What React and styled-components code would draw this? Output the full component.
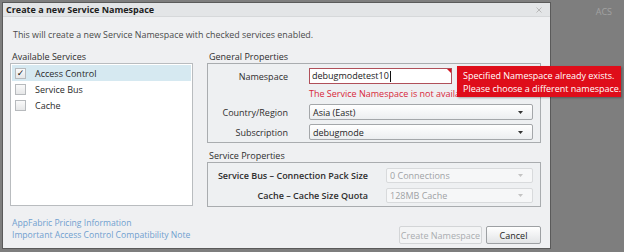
import styled, { createGlobalStyle } from "styled-components";

const GlobalStyle = createGlobalStyle`
  html, body {
    margin: 0;
    padding: 0;
    background: #7e7e7e;
    font-family: "Open Sans", "Noto Sans", sans-serif;
  }
`;

const services = [
  { name: "Access Control", checked: true },
  { name: "Service Bus", checked: false },
  { name: "Cache", checked: false },
];

const Arrow = ({ disabled }) => (
  <svg width="5" height="3" viewBox="0 0 5 3">
    <path d="M0 0 L5 0 L2.5 3 Z" fill={disabled ? "#c4c4c4" : "#333"} />
  </svg>
);

const Select = ({ value, disabled, width }) => (
  <SelectBox $disabled={disabled} $width={width}>
    <span>{value}</span>
    <Arrow disabled={disabled} />
  </SelectBox>
);

const App = () => {
  return (
    <>
      <GlobalStyle />
      <Screen>
        <Dialog>
          <TitleBar>
            <Title>Create a new Service Namespace</Title>
            <Close>
              <svg width="6" height="6" viewBox="0 0 6 6">
                <path d="M0.5 0.5 L5.5 5.5 M5.5 0.5 L0.5 5.5" stroke="#b8b8b8" strokeWidth="1" />
              </svg>
            </Close>
          </TitleBar>
          <Body>
            <Intro>This will create a new Service Namespace with checked services enabled.</Intro>
            <Columns>
              <LeftCol>
                <SectionLabel>Available Services</SectionLabel>
                <ListBox>
                  {services.map((s) => (
                    <ListItem key={s.name} $selected={s.checked}>
                      <Check>{s.checked ? "✓" : ""}</Check>
                      {s.name}
                    </ListItem>
                  ))}
                </ListBox>
              </LeftCol>
              <RightCol>
                <SectionLabel>General Properties</SectionLabel>
                <Group $pad="4px 0 2px">
                  <FieldRow $label="80px" $gap="21px" $h="16px">
                    <FieldLabel>Namespace</FieldLabel>
                    <InputWrap>
                      <TextInput>
                        debugmodetest10<Caret />
                      </TextInput>
                      <Corner />
                      <Tooltip>
                        Specified Namespace already exists.
                        <br />
                        Please choose a different namespace.
                      </Tooltip>
                    </InputWrap>
                  </FieldRow>
                  <ErrorLine>The Service Namespace is not available.</ErrorLine>
                  <FieldRow $label="80px" $gap="21px" $h="16px">
                    <FieldLabel>Country/Region</FieldLabel>
                    <Select value="Asia (East)" width="224px" />
                  </FieldRow>
                  <Spacer $h="4px" />
                  <FieldRow $label="80px" $gap="21px" $h="16px">
                    <FieldLabel>Subscription</FieldLabel>
                    <Select value="debugmode" width="224px" />
                  </FieldRow>
                </Group>
                <SectionLabel $top="7px">Service Properties</SectionLabel>
                <Group $pad="5px 0 3px">
                  <FieldRow $label="160px" $gap="18px" $h="15px">
                    <FieldLabel $bold>Service Bus – Connection Pack Size</FieldLabel>
                    <Select value="0 Connections" width="147px" disabled />
                  </FieldRow>
                  <Spacer $h="5px" />
                  <FieldRow $label="160px" $gap="18px" $h="15px">
                    <FieldLabel $bold>Cache – Cache Size Quota</FieldLabel>
                    <Select value="128MB Cache" width="147px" disabled />
                  </FieldRow>
                </Group>
              </RightCol>
            </Columns>
            <Footer>
              <Links>
                <Link>AppFabric Pricing Information</Link>
                <Link>Important Access Control Compatibility Note</Link>
              </Links>
              <Buttons>
                <Button disabled $width="83px">Create Namespace</Button>
                <Button $width="55px">Cancel</Button>
              </Buttons>
            </Footer>
          </Body>
        </Dialog>
        <Side>ACS</Side>
      </Screen>
    </>
  );
};

export default App;

const Screen = styled.div`
  display: flex;
  width: 624px;
  height: 252px;
  overflow: hidden;
  padding-top: 2px;
  box-sizing: border-box;
`;

const Dialog = styled.div`
  margin-left: 2px;
  width: 549px;
  height: 247px;
  box-sizing: border-box;
  border: 1px solid #5a5a5a;
  background: #eff0f2;
  display: flex;
  flex-direction: column;
`;

const TitleBar = styled.div`
  height: 13px;
  background: #e3e5e7;
  border-bottom: 1px solid #d6d8da;
  display: flex;
  align-items: center;
  justify-content: space-between;
  padding: 0 6px 0 3px;
`;

const Title = styled.div`
  font-size: 9px;
  font-weight: 700;
  color: #1e1e1e;
`;

const Close = styled.div`
  display: flex;
  align-items: center;
  padding-right: 2px;
`;

const Body = styled.div`
  flex: 1;
  display: flex;
  flex-direction: column;
  padding: 0 7px 0 7px;
`;

const Intro = styled.div`
  margin-top: 12px;
  height: 12px;
  line-height: 12px;
  font-size: 8.9px;
  color: #4a4a4a;
  padding-left: 3px;
`;

const Columns = styled.div`
  display: flex;
  gap: 14px;
  margin-top: 10px;
`;

const LeftCol = styled.div`
  width: 183px;
  display: flex;
  flex-direction: column;
`;

const RightCol = styled.div`
  width: 334px;
  display: flex;
  flex-direction: column;
`;

const SectionLabel = styled.div`
  height: 12px;
  line-height: 12px;
  font-size: 9px;
  font-weight: 500;
  color: #2e2e2e;
  padding-left: 2px;
  margin-top: ${({ $top }) => $top || "0"};
`;

const ListBox = styled.div`
  height: 143px;
  box-sizing: border-box;
  border: 1px solid #b9bcbf;
  background: #fff;
  padding: 1px;
  display: flex;
  flex-direction: column;
`;

const ListItem = styled.div`
  height: 16px;
  display: flex;
  align-items: center;
  gap: 9px;
  padding-left: 3px;
  font-size: 9px;
  color: #2a2a2a;
  background: ${({ $selected }) => ($selected ? "#d6e9f1" : "transparent")};
`;

const Check = styled.span`
  width: 9px;
  height: 9px;
  border: 1px solid #b7babd;
  background: linear-gradient(#fafafa, #e6e7e8);
  font-size: 9px;
  line-height: 9px;
  text-align: center;
  color: #111;
  font-family: "DejaVu Sans", sans-serif;
`;

const Group = styled.div`
  border: 1px solid #a9acaf;
  background: #eef0f2;
  padding: ${({ $pad }) => $pad};
  display: flex;
  flex-direction: column;
`;

const FieldRow = styled.div`
  display: grid;
  grid-template-columns: ${({ $label }) => $label} auto;
  column-gap: ${({ $gap }) => $gap};
  align-items: center;
  height: ${({ $h }) => $h};
`;

const FieldLabel = styled.div`
  text-align: right;
  font-size: 9px;
  color: #2e2e2e;
  font-weight: ${({ $bold }) => ($bold ? 600 : 400)};
  white-space: nowrap;
`;

const InputWrap = styled.div`
  position: relative;
  display: flex;
  align-items: center;
  height: 16px;
`;

const TextInput = styled.div`
  width: 143px;
  height: 16px;
  box-sizing: border-box;
  border: 1px solid #b0505a;
  background: #fff;
  font-size: 9px;
  line-height: 14px;
  padding-left: 2px;
  color: #1a1a1a;
  display: flex;
  align-items: center;
`;

const Caret = styled.span`
  width: 1px;
  height: 11px;
  background: #111;
  margin-left: 1px;
`;

const Corner = styled.span`
  position: absolute;
  left: 138px;
  top: 1px;
  width: 0;
  height: 0;
  border-top: 4px solid #d4121e;
  border-left: 4px solid transparent;
`;

const Tooltip = styled.div`
  position: absolute;
  left: 148px;
  top: -2px;
  width: 164px;
  height: 31px;
  box-sizing: border-box;
  background: #df0d1a;
  color: #fff;
  font-size: 9px;
  line-height: 13px;
  padding: 3px 0 0 6px;
  white-space: nowrap;
  box-shadow: 1px 1px 2px rgba(0, 0, 0, 0.3);
  z-index: 2;
`;

const ErrorLine = styled.div`
  height: 20px;
  line-height: 20px;
  padding-left: 101px;
  font-size: 9px;
  color: #d8273a;
  white-space: nowrap;
  overflow: hidden;
`;

const Spacer = styled.div`
  height: ${({ $h }) => $h};
`;

const SelectBox = styled.div`
  width: ${({ $width }) => $width};
  height: 100%;
  box-sizing: border-box;
  border: 1px solid ${({ $disabled }) => ($disabled ? "#d8dadc" : "#a4a7aa")};
  border-radius: 2px;
  background: ${({ $disabled }) =>
    $disabled ? "#f6f7f8" : "linear-gradient(#ffffff, #eceef0)"};
  display: flex;
  align-items: center;
  justify-content: space-between;
  padding: 0 9px 0 3px;
  font-size: 9px;
  color: ${({ $disabled }) => ($disabled ? "#9fa2a5" : "#1e1e1e")};
`;

const Footer = styled.div`
  display: flex;
  justify-content: space-between;
  align-items: flex-start;
  margin-top: 10px;
`;

const Links = styled.div`
  display: flex;
  flex-direction: column;
  padding-left: 2px;
`;

const Link = styled.a`
  height: 12px;
  line-height: 12px;
  font-size: 8.6px;
  color: #6f9fcf;
`;

const Buttons = styled.div`
  display: flex;
  gap: 4px;
  margin-top: 9px;
  padding-right: 2px;
`;

const Button = styled.button`
  width: ${({ $width }) => $width};
  height: 18px;
  padding: 0;
  font-family: "Open Sans", "Noto Sans", sans-serif;
  font-size: 9px;
  border-radius: 2px;
  border: 1px solid ${({ disabled }) => (disabled ? "#d3d5d7" : "#9da0a3")};
  background: ${({ disabled }) =>
    disabled ? "#f3f4f5" : "linear-gradient(#ffffff, #e2e4e6)"};
  color: ${({ disabled }) => (disabled ? "#a9acaf" : "#1e1e1e")};
`;

const Side = styled.div`
  flex: 1;
  text-align: right;
  padding: 3px 12px 0 0;
  font-size: 9px;
  color: #a2a2a2;
`;
